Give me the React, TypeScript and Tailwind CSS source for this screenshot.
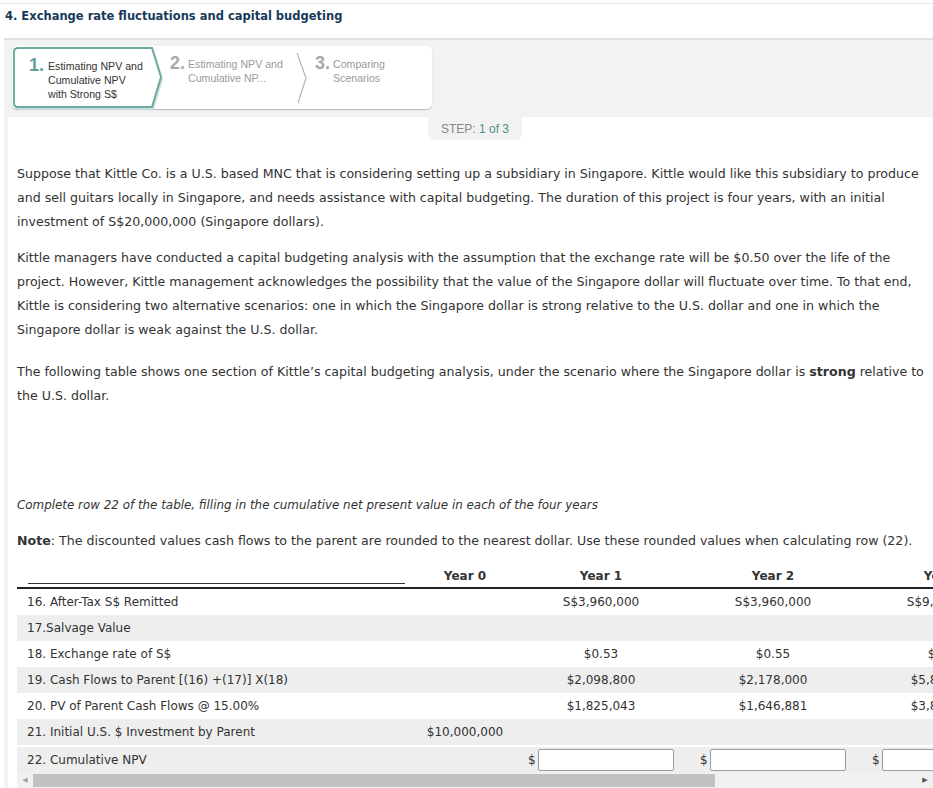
import React from "react";

const rows = [
  { label: "16. After-Tax S$ Remitted", y0: "", y1: "S$3,960,000", y2: "S$3,960,000", y3: "S$9,760,000", shade: false },
  { label: "17.Salvage Value", y0: "", y1: "", y2: "", y3: "", shade: true },
  { label: "18. Exchange rate of S$", y0: "", y1: "$0.53", y2: "$0.55", y3: "$0.60", shade: false },
  { label: "19. Cash Flows to Parent [(16) +(17)] X(18)", y0: "", y1: "$2,098,800", y2: "$2,178,000", y3: "$5,856,000", shade: true },
  { label: "20. PV of Parent Cash Flows @ 15.00%", y0: "", y1: "$1,825,043", y2: "$1,646,881", y3: "$3,850,448", shade: false },
  { label: "21. Initial U.S. $ Investment by Parent", y0: "$10,000,000", y1: "", y2: "", y3: "", shade: true },
];

function ActiveTab() {
  return (
    <div className="relative w-[152px] h-[64px] shrink-0">
      <svg className="absolute inset-0" width="152" height="64" viewBox="0 0 152 64">
        <path d="M7 4 H141 L150 33 L141 63 H7 Q4 63 4 60 V7 Q4 4 7 4 Z" fill="none" stroke="#c9dedb" strokeWidth="2" />
        <path d="M6 2 H140 L149 31 L140 61 H6 Q2 61 2 57 V6 Q2 2 6 2 Z" fill="#ffffff" stroke="#6ea9a3" strokeWidth="2" />
      </svg>
      <div className="relative flex pl-[17px] pt-[10px] gap-[4px]">
        <span className="text-[18px] leading-[18px] font-bold text-[#5f9f99]">1.</span>
        <span className="text-[10.6px] leading-[14px] text-[#333] pt-[3px]">
          Estimating NPV and
          <br />
          Cumulative NPV
          <br />
          with Strong S$
        </span>
      </div>
    </div>
  );
}

export default function App() {
  return (
    <div className="w-[933px] h-[788px] overflow-hidden bg-white" style={{ fontFamily: '"Liberation Sans", Arial, sans-serif' }}>
      <div className="mt-[3px] border-t border-[#e6e6e6] h-[35px] pl-[5px] pt-[4px]">
        <h1
          className="text-[11.5px] font-bold text-[#173a5a]"
          style={{ fontFamily: '"DejaVu Sans", Verdana, sans-serif' }}
        >
          4. Exchange rate fluctuations and capital budgeting
        </h1>
      </div>

      <div className="ml-[4px] bg-[#f2f2f2] border-t-2 border-[#e2e2e2] pt-[6px]">
        {/* step tabs */}
        <div className="ml-[8px] w-[420px] h-[63px] bg-white rounded-[5px] shadow-[0_1px_1px_#b8b8b8] flex">
          <ActiveTab />
          <div className="flex pl-[6px] pt-[8px] gap-[3px] w-[131px]">
            <span className="text-[18px] leading-[18px] font-bold text-[#a8a8a8]">2.</span>
            <span className="text-[10.6px] leading-[14px] text-[#9a9a9a] pt-[3px]">
              Estimating NPV and
              <br />
              Cumulative NP...
            </span>
          </div>
          <svg width="14" height="63" viewBox="0 0 14 63" className="shrink-0">
            <path d="M2 7 L11 32 L3 57" fill="none" stroke="#b5b5b5" strokeWidth="1.2" />
          </svg>
          <div className="flex pl-[6px] pt-[8px] gap-[3px]">
            <span className="text-[18px] leading-[18px] font-bold text-[#a8a8a8]">3.</span>
            <span className="text-[10.6px] leading-[14px] text-[#9a9a9a] pt-[3px]">
              Comparing
              <br />
              Scenarios
            </span>
          </div>
        </div>

        {/* content */}
        <div className="mt-[8px] bg-white w-[925px] ml-[4px]">
          <div className="ml-[420px] w-[94px] h-[23px] bg-[#f2f2f2] rounded-b-[6px] flex items-center justify-center text-[12px]">
            <span className="text-[#888]">STEP:&nbsp;</span>
            <span className="text-[#4d8f8a]">1 of 3</span>
          </div>

          <div
            className="px-[9px] text-[12.6px] leading-[24px] text-[#333]"
            style={{ fontFamily: '"DejaVu Sans", Verdana, sans-serif' }}
          >
            <p className="mt-[22px]">
              Suppose that Kittle Co. is a U.S. based MNC that is considering setting up a subsidiary in Singapore. Kittle would like this subsidiary to produce and sell guitars locally in Singapore, and needs assistance with capital budgeting. The duration of this project is four years, with an initial investment of S$20,000,000 (Singapore dollars).
            </p>
            <p className="mt-[12px]">
              Kittle managers have conducted a capital budgeting analysis with the assumption that the exchange rate will be $0.50 over the life of the project. However, Kittle management acknowledges the possibility that the value of the Singapore dollar will fluctuate over time. To that end, Kittle is considering two alternative scenarios: one in which the Singapore dollar is strong relative to the U.S. dollar and one in which the Singapore dollar is weak against the U.S. dollar.
            </p>
            <p className="mt-[18px]">
              The following table shows one section of Kittle’s capital budgeting analysis, under the scenario where the Singapore dollar is <b>strong</b> relative to the U.S. dollar.
            </p>
            <p className="mt-[85px] italic text-[11.9px]">
              Complete row 22 of the table, filling in the cumulative net present value in each of the four years
            </p>
            <p className="mt-[12px]">
              <b>Note</b>: The discounted values cash flows to the parent are rounded to the nearest dollar. Use these rounded values when calculating row (22).
            </p>
          </div>

          {/* table */}
          <div className="ml-[9px] mt-[11px] overflow-hidden" style={{ fontFamily: '"DejaVu Sans", Verdana, sans-serif' }}>
            <div className="w-[1200px] text-[12px] text-[#333]">
              <div className="flex h-[25px] border-b-2 border-[#222] font-bold items-center">
                <div className="w-[398px] h-full pl-[11px] pr-[10px] flex items-end pb-[3px]">
                  <div className="w-full border-b border-[#333]" />
                </div>
                <div className="w-[100px] text-center">Year 0</div>
                <div className="w-[172px] text-center">Year 1</div>
                <div className="w-[172px] text-center">Year 2</div>
                <div className="w-[172px] text-center">Year 3</div>
              </div>
              {rows.map((r) => (
                <div
                  key={r.label}
                  className={`flex h-[26px] items-center ${r.shade ? "bg-[#eeeeee]" : "bg-white"}`}
                >
                  <div className="w-[398px] pl-[10px]">{r.label}</div>
                  <div className="w-[100px] text-center">{r.y0}</div>
                  <div className="w-[172px] text-center">{r.y1}</div>
                  <div className="w-[172px] text-center">{r.y2}</div>
                  <div className="w-[172px] text-center">{r.y3}</div>
                </div>
              ))}
              <div className="flex h-[28px] items-center bg-[#eeeeee] border-t-2 border-white">
                <div className="w-[398px] pl-[10px]">22. Cumulative NPV</div>
                <div className="w-[100px]" />
                {[0, 1, 2].map((i) => (
                  <div key={i} className="w-[172px] flex items-center pl-[13px] gap-[2px]">
                    <span>$</span>
                    <input
                      type="text"
                      className="w-[136px] h-[22px] bg-white border border-[#9c9c9c] rounded-[2px] outline-none"
                    />
                  </div>
                ))}
              </div>
            </div>
            {/* scrollbar */}
            <div className="h-[15px] bg-[#f1f1f1] flex items-center">
              <span className="w-[16px] text-[7px] text-[#a3a3a3] text-center">◀</span>
              <div className="w-[682px] h-[13px] bg-[#c1c1c1]" />
              <div className="flex-1" />
              <span className="w-[16px] text-[7px] text-[#505050] text-center">▶</span>
            </div>
          </div>
        </div>
      </div>
    </div>
  );
}
